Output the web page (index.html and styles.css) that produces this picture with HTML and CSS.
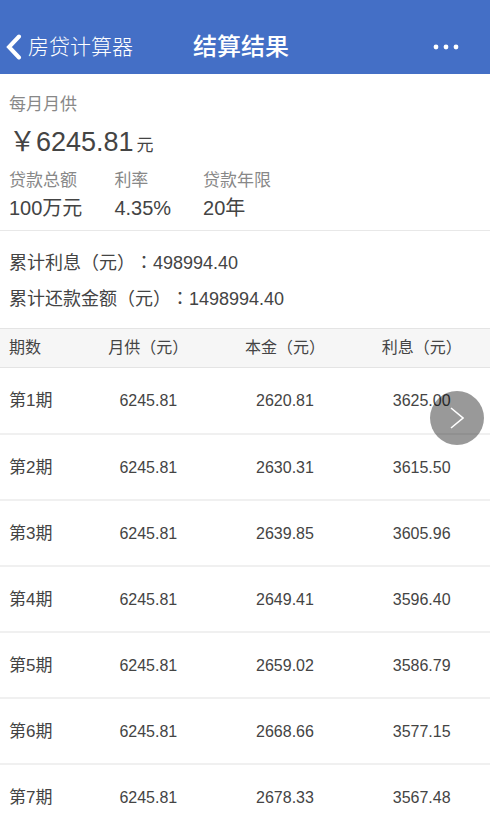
FILE: index.html
```
<!DOCTYPE html>
<html lang="zh-CN">
<head>
    <meta charset="UTF-8">
    <meta name="viewport" content="width=device-width, initial-scale=1">
    <title>结算结果</title>
    <link rel="stylesheet" href="styles.css">
</head>
<body>
<header class="header">
    <a class="back" href="#">
        <svg width="16" height="26" viewBox="0 0 16 26"><path d="M13 2.5 L3 13 L13 23.5" fill="none" stroke="#fff" stroke-width="4" stroke-linecap="round"/></svg>
        <span>房贷计算器</span>
    </a>
    <h1 class="title">结算结果</h1>
    <button class="more" type="button" aria-label="更多">
        <svg width="26" height="6" viewBox="0 0 26 6" fill="#fff"><circle cx="3" cy="3" r="2.4"/><circle cx="13" cy="3" r="2.4"/><circle cx="23" cy="3" r="2.4"/></svg>
    </button>
</header>
<main>
    <section class="summary">
        <p class="label">每月月供</p>
        <p class="amount">￥6245.81<span class="unit">元</span></p>
        <dl class="info">
            <div><dt class="label">贷款总额</dt><dd>100万元</dd></div>
            <div><dt class="label">利率</dt><dd>4.35%</dd></div>
            <div><dt class="label">贷款年限</dt><dd>20年</dd></div>
        </dl>
    </section>
    <section class="total">
        <p>累计利息（元）<span class="colon" lang="zh-TW">：</span>498994.40</p>
        <p>累计还款金额（元）<span class="colon" lang="zh-TW">：</span>1498994.40</p>
    </section>
    <table class="list">
        <thead>
        <tr><th class="num">期数</th><th>月供（元）</th><th>本金（元）</th><th>利息（元）</th></tr>
        </thead>
        <tbody>
        <tr><td class="num">第1期</td><td>6245.81</td><td>2620.81</td><td>3625.00</td></tr>
        <tr><td class="num">第2期</td><td>6245.81</td><td>2630.31</td><td>3615.50</td></tr>
        <tr><td class="num">第3期</td><td>6245.81</td><td>2639.85</td><td>3605.96</td></tr>
        <tr><td class="num">第4期</td><td>6245.81</td><td>2649.41</td><td>3596.40</td></tr>
        <tr><td class="num">第5期</td><td>6245.81</td><td>2659.02</td><td>3586.79</td></tr>
        <tr><td class="num">第6期</td><td>6245.81</td><td>2668.66</td><td>3577.15</td></tr>
        <tr><td class="num">第7期</td><td>6245.81</td><td>2678.33</td><td>3567.48</td></tr>
        </tbody>
    </table>
</main>
<button class="next" type="button" aria-label="下一页">
    <svg width="14" height="22" viewBox="0 0 14 22"><path d="M1 1 L13 11 L1 21" fill="none" stroke="#fff" stroke-width="1.6"/></svg>
</button>
</body>
</html>
```
FILE: styles.css
```
*{
    margin: 0;
    padding: 0;
    box-sizing: border-box;
}
html{
    scrollbar-width: none;
}
body{
    background: #fff;
    color: #444;
    font-family: "Liberation Sans", "Noto Sans CJK SC", sans-serif;
    text-spacing-trim: space-all;
}
button{
    border: none;
    background: none;
    cursor: pointer;
}
svg{
    display: block;
}
/* 顶部导航 */
.header{
    display: grid;
    grid-template-columns: 1fr auto 1fr;
    align-items: center;
    height: 74px;
    padding: 20px 14px 0 6px;
    background: #446fc6;
    color: #fff;
}
.back{
    display: flex;
    align-items: center;
    gap: 6px;
    color: #fff;
    font-size: 21px;
    font-weight: 300;
    line-height: 24px;
    text-decoration: none;
    white-space: nowrap;
}
.title{
    font-size: 24px;
    font-weight: 500;
    line-height: 24px;
}
.more{
    justify-self: end;
    padding: 10px 17px;
}
/* 贷款概况 */
.summary{
    padding: 19px 9px 7px;
    border-bottom: 1px solid #e8e8e8;
}
.label{
    color: #888;
    font-size: 17px;
    line-height: 24px;
}
.amount{
    margin: 5px 0 3px;
    font-size: 27px;
    line-height: 40px;
}
.unit{
    margin-left: 3px;
    font-size: 17px;
}
.info{
    display: flex;
    gap: 32px;
}
.info dd{
    font-size: 20px;
    line-height: 30px;
}
.total{
    padding: 13px 9px 12px;
    font-size: 18px;
    line-height: 34px;
}
/* 冒号居中 */
.colon{
    font-family: "Noto Sans CJK TC", sans-serif;
}
/* 还款明细 */
.list{
    width: 100%;
    table-layout: fixed;
    border-collapse: collapse;
    font-size: 16px;
    line-height: 24px;
    text-align: center;
}
.list th{
    height: 39px;
    background: #f6f6f6;
    border-top: 1px solid #e4e4e4;
    border-bottom: 1px solid #e4e4e4;
    font-weight: 400;
}
.list td{
    height: 66px;
    padding-top: 21px;
    border-bottom: 2px solid #f0f0f0;
    vertical-align: baseline;
}
.list .num{
    width: 80px;
    padding-left: 9px;
    text-align: left;
}
.list td.num{
    font-size: 17px;
}
.next{
    position: fixed;
    top: 391px;
    right: 6px;
    display: flex;
    align-items: center;
    justify-content: center;
    width: 54px;
    height: 54px;
    border-radius: 50%;
    background: rgba(0, 0, 0, .4);
}
```
